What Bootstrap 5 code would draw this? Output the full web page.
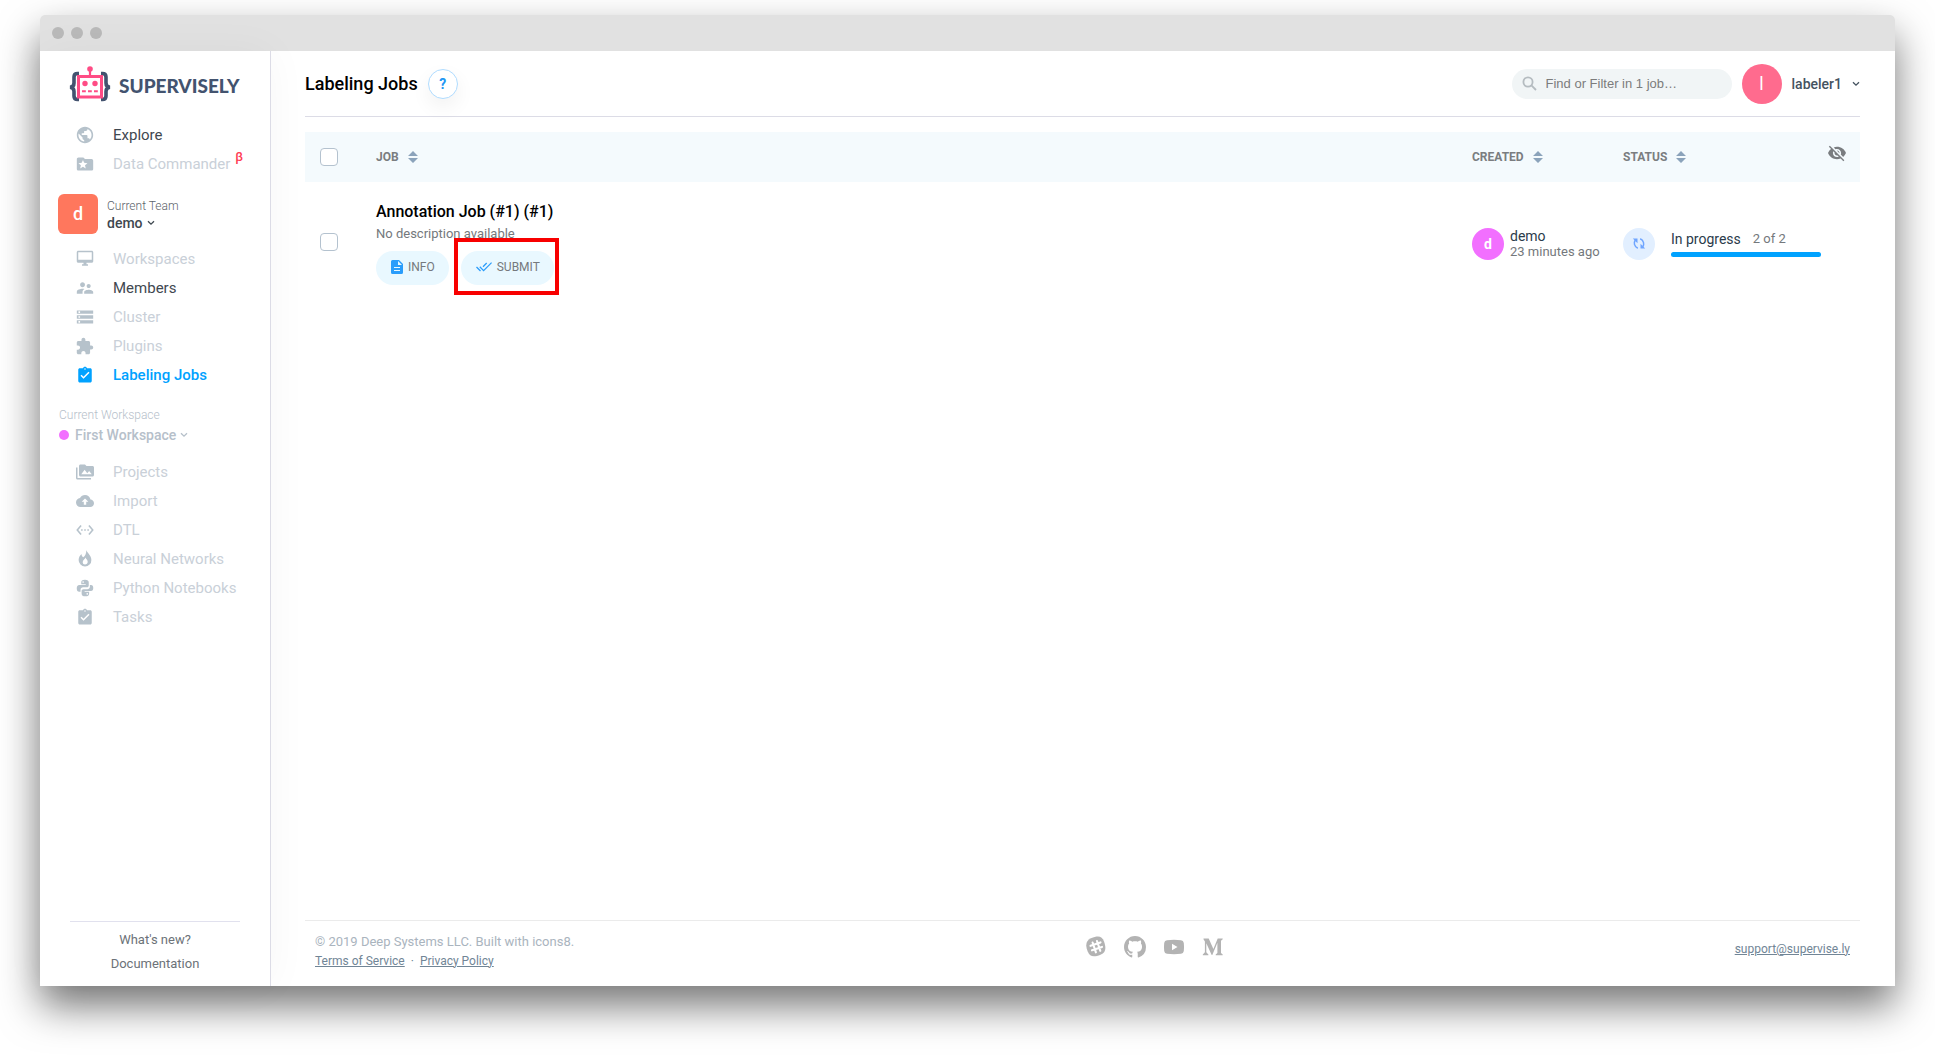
<!DOCTYPE html>
<html lang="en">
<head>
<meta charset="utf-8">
<meta name="viewport" content="width=device-width, initial-scale=1">
<title>Labeling Jobs - Supervisely</title>
<link href="https://cdn.jsdelivr.net/npm/bootstrap@5.3.0/dist/css/bootstrap.min.css" rel="stylesheet">
<style>
body { font-family: Roboto, "Liberation Sans", sans-serif; font-size: 14px; line-height: 16px; background: #fff; color: #2b3b4b; }
.stage { min-height: 100vh; padding: 15px 40px 70px; }
.app-window { background: #fff; border-radius: 5px 5px 0 0; box-shadow: 0 20px 40px rgba(0,0,0,.54); }
.titlebar { height: 36px; background: #e1e1e1; border-radius: 5px 5px 0 0; padding-left: 12px; gap: 7px; }
.titlebar span { width: 12px; height: 12px; border-radius: 50%; background: #b9b9b9; }
a { color: inherit; text-decoration: none; }
svg { display: block; flex: none; }

.sidebar { width: 231px; border-right: 1px solid #dcdce6; box-shadow: 0 0 40px rgba(0,0,0,.04); background: #fff; }
.brand { padding: 15px 0 0 28px; height: 69px; gap: 8px; }
.brand-name { font-family: Lato, sans-serif; font-weight: 900; font-size: 19px; line-height: 24px; color: #43536f; padding-top: 8px; }
.side-nav a { height: 29px; padding-left: 36px; font-size: 15px; color: #c9d0d8; }
.side-nav svg { width: 18px; height: 18px; margin-right: 19px; color: #b6c2cb; fill: currentColor; }
.side-nav a.enabled { color: #3f4850; }
.side-nav a.current { color: #00a2ff; font-weight: 500; }
.side-nav a.current svg { color: #00a2ff; }
.beta { font-size: 13px; font-weight: 500; color: #ff3e55; padding: 0 0 14px 5px; }
.team { padding: 16px 0 10px 18px; gap: 9px; }
.team-tile { width: 40px; height: 40px; border-radius: 6px; background: #ff775d; color: #fff; font-size: 18px; font-weight: 500; }
.picker { border: 0; background: none; padding: 0; gap: 4px; font-weight: 500; color: #3f4850; line-height: 17px; }
.tiny { font-size: 12px; font-weight: 300; color: #5c646b; line-height: 18px; }
.workspace { padding: 17px 0 11px 19px; }
.workspace .tiny, .workspace .picker { color: #b6c0ca; }
.workspace .picker { line-height: 22px; }
.ws-dot { width: 10px; height: 10px; border-radius: 50%; background: #f26fff; margin-right: 2px; }
.side-foot { margin: 0 30px 10px; border-top: 1px solid #e1e1ee; padding-top: 6px; font-size: 13px; line-height: 24px; color: #6c7278; }

.main-pane { padding: 0 35px 0 34px; }
.topbar { height: 66px; border-bottom: 1px solid #dcdce6; gap: 10px; }
.topbar h1 { font-size: 18px; line-height: 24px; font-weight: 500; color: #000; margin: 0; }
.help-btn { width: 30px; height: 30px; border-radius: 50%; border: 1px solid #b0dcff; background: #fff; color: #2196f3; font-weight: 700; padding: 0; box-shadow: 0 8px 20px rgba(0,0,0,.06); }
.finder { width: 220px; height: 30px; border-radius: 15px; background: #f1f5f6; padding: 0 10px; gap: 9px; }
.finder input { border: 0; background: none; padding: 0; width: 160px; outline: 0; font: 13px "Liberation Sans", sans-serif; }
.finder input::placeholder { color: #7c7c7c; opacity: 1; }
.user-pic { width: 40px; height: 40px; border-radius: 50%; background: #ff6b8e; color: #fff; font-size: 18px; }
.user-btn { border: 0; background: none; padding: 0; font-weight: 500; color: #44525f; gap: 10px; }

.jobs { width: 100%; margin-top: 15px; table-layout: fixed; }
.jobs th { height: 50px; background: #f4fafd; font-size: 12px; color: #7a7d80; padding: 0; vertical-align: middle; }
.jobs td { height: 120px; padding: 0; vertical-align: middle; }
.jobs td.lowered { padding-top: 3px; }
.c-check { width: 71px; } .c-created { width: 151px; } .c-status { width: 205px; } .c-eye { width: 32px; }
.jobs .form-check-input { width: 18px; height: 18px; margin: 0 0 0 15px; border: 1px solid #b4c2cf; border-radius: 4px; display: block; }
.sorter { border: 0; background: none; padding: 0; gap: 9px; font-weight: 700; color: inherit; }
.job-name { font-size: 16px; line-height: 24px; font-weight: 500; color: #000; }
.job-note { font-size: 13px; line-height: 20px; color: #74787c; }
.job-actions { gap: 12px; margin-top: 7px; }
.pill { height: 34px; border: 0; border-radius: 17px; background: #e9f8ff; color: #75797d; font-size: 12px; padding: 0 14px 2px 15px; gap: 5px; }
.pill-frame::after { content: ""; position: absolute; inset: -13px -5px -10px -7px; border: 4px solid #f80000; pointer-events: none; }
.who { gap: 6px; }
.mini-pic { width: 32px; height: 32px; border-radius: 50%; background: #f26fff; color: #fff; font-weight: 700; }
.sync { width: 32px; height: 32px; border-radius: 50%; background: #e2efff; }
.soft { font-size: 13px; color: #74787c; }
.meter { width: 150px; height: 5px; border-radius: 3px; margin-top: 5px; background: #e9f1f7; --bs-progress-bar-bg: #00a2ff; }
.page-foot { height: 66px; border-top: 1px solid #ebebeb; padding: 0 10px 10px; font-size: 12px; color: #718596; }
.page-foot a { text-decoration: underline; }
.page-foot .legal { font-size: 13px; color: #aab4be; line-height: 20px; padding-top: 4px; }
.page-foot .terms { line-height: 18px; gap: 6px; }
.social { gap: 17px; fill: #b3b3b3; padding-bottom: 4px; }
.app-body { min-height: 935px; }
</style>
</head>
<body>
<svg width="0" height="0" class="position-absolute" aria-hidden="true">
  <symbol id="chev" viewBox="0 0 8 6"><path d="M1 1.200l3 3 3-3" fill="none" stroke="currentColor" stroke-width="1.300"/></symbol>
  <symbol id="sort" viewBox="0 0 10 12"><path d="M5 0l5 5H0zM5 12L0 7h10z" fill="#8ba3bb"/></symbol>
  <symbol id="task" viewBox="0 0 24 24"><path d="M19 3h-4.200C14.400 1.800 13.300 1 12 1s-2.400.8-2.800 2H5c-1.100 0-2 .9-2 2v15c0 1.100.9 2 2 2h14c1.100 0 2-.9 2-2V5c0-1.100-.9-2-2-2zm-7 0c.55 0 1 .45 1 1s-.45 1-1 1-1-.45-1-1 .45-1 1-1zm-2 14l-4-4 1.410-1.410L10 14.170l6.590-6.590L18 9l-8 8z"/></symbol>
</svg>
<div class="stage">
<div class="app-window">
  <div class="titlebar d-flex align-items-center"><span></span><span></span><span></span></div>
  <div class="app-body d-flex">
    <aside class="sidebar d-flex flex-column flex-shrink-0">
      <a href="#" class="brand d-flex align-items-start">
        <svg width="43" height="36" viewBox="0 0 43 36">
          <g fill="none" stroke="#43536f" stroke-width="3.600"><path d="M11 7.500H9.500Q6 7.500 6 11v6q0 4-4 4.300 4 .3 4 4.300v4.400q0 3.500 3.500 3.500H11M33 7.500h1.500Q38 7.500 38 11v6q0 4 4 4.300-4 .3-4 4.300v4.400q0 3.500-3.500 3.500H33"/></g>
          <rect x="10.500" y="10.500" width="23" height="20.500" fill="#fff" stroke="#ff4c85" stroke-width="3"/>
          <path d="M22 4v6" stroke="#ff4c85" stroke-width="2.200"/>
          <g fill="#ff4c85"><circle cx="22" cy="3" r="2.800"/><circle cx="17" cy="17.500" r="2.700"/><circle cx="27" cy="17.500" r="2.700"/></g>
          <path d="M14 25.200h16" stroke="#ff4c85" stroke-width="2" stroke-dasharray="3.800 2.200"/>
        </svg>
        <span class="brand-name">SUPERVISELY</span>
      </a>
      <nav class="side-nav">
        <a href="#" class="enabled d-flex align-items-center"><svg viewBox="1 1 22 22"><path d="M12 2C6.480 2 2 6.480 2 12s4.480 10 10 10 10-4.480 10-10S17.520 2 12 2zm-1 17.930c-3.950-.49-7-3.850-7-7.930 0-.62.08-1.210.21-1.790L9 15v1c0 1.100.9 2 2 2v1.930zm6.900-2.540c-.26-.81-1-1.390-1.900-1.390h-1v-3c0-.55-.45-1-1-1H8v-2h2c.55 0 1-.45 1-1V7h2c1.100 0 2-.9 2-2v-.41c2.930 1.190 5 4.060 5 7.410 0 2.080-.8 3.970-2.100 5.390z"/></svg>Explore</a>
        <a href="#" class="d-flex align-items-center"><svg viewBox="1 1 22 22"><path fill-rule="evenodd" d="M20 6h-8l-2-2H4c-1.100 0-2 .9-2 2v12c0 1.100.9 2 2 2h16c1.100 0 2-.9 2-2V8c0-1.100-.9-2-2-2zM12.900 17.500L9.500 15.400l-3.400 2.100.9-3.900-3-2.600 4-.4 1.500-3.600 1.500 3.600 4 .4-3 2.600z"/></svg>Data Commander<span class="beta">β</span></a>
      </nav>
      <div class="team d-flex align-items-center">
        <div class="team-tile d-flex align-items-center justify-content-center">d</div>
        <div>
          <div class="tiny">Current Team</div>
          <button type="button" class="picker d-flex align-items-center">demo <svg width="8" height="6"><use href="#chev"/></svg></button>
        </div>
      </div>
      <nav class="side-nav">
        <a href="#" class="d-flex align-items-center"><svg viewBox="0 1 24 24"><path d="M21 2H3c-1.100 0-2 .9-2 2v12c0 1.100.9 2 2 2h7v2H8v2h8v-2h-2v-2h7c1.100 0 2-.9 2-2V4c0-1.100-.9-2-2-2zm0 12H3V4h18v10z"/></svg>Workspaces</a>
        <a href="#" class="enabled d-flex align-items-center"><svg viewBox="1 1 22 22"><path d="M16.500 12c1.380 0 2.490-1.120 2.490-2.500S17.880 7 16.500 7 14 8.120 14 9.500s1.120 2.500 2.500 2.500zM9 11c1.660 0 2.990-1.340 2.990-3S10.660 5 9 5 6 6.340 6 8s1.340 3 3 3zm7.500 3c-1.830 0-5.500.92-5.500 2.750V19h11v-2.250c0-1.830-3.670-2.750-5.500-2.750zM9 13c-2.330 0-7 1.170-7 3.500V19h7v-2.250c0-.85.33-2.340 2.370-3.470C10.500 13.100 9.660 13 9 13z"/></svg>Members</a>
        <a href="#" class="d-flex align-items-center"><svg viewBox="1 1 22 22"><path d="M2 20h20v-4H2v4zm2-3h2v2H4v-2zM2 4v4h20V4H2zm4 3H4V5h2v2zm-4 7h20v-4H2v4zm2-3h2v2H4v-2z"/></svg>Cluster</a>
        <a href="#" class="d-flex align-items-center"><svg viewBox="1 0 23 23"><path d="M20.500 11H19V7c0-1.100-.9-2-2-2h-4V3.500C13 2.120 11.880 1 10.500 1S8 2.120 8 3.500V5H4c-1.100 0-1.990.9-1.990 2v3.800H3.500c1.490 0 2.700 1.210 2.700 2.700s-1.210 2.700-2.700 2.700H2V20c0 1.100.9 2 2 2h3.800v-1.500c0-1.490 1.210-2.700 2.700-2.700s2.700 1.210 2.700 2.700V22H17c1.100 0 2-.9 2-2v-4h1.500c1.380 0 2.500-1.120 2.500-2.500S21.880 11 20.500 11z"/></svg>Plugins</a>
        <a href="#" class="current d-flex align-items-center"><svg><use href="#task"/></svg>Labeling Jobs</a>
      </nav>
      <div class="workspace">
        <div class="tiny">Current Workspace</div>
        <button type="button" class="picker d-flex align-items-center"><span class="ws-dot"></span>First Workspace <svg width="8" height="6"><use href="#chev"/></svg></button>
      </div>
      <nav class="side-nav">
        <a href="#" class="d-flex align-items-center"><svg viewBox="0 0 24 24"><path d="M2 6H0v14c0 1.100.9 2 2 2h18v-2H2V6zm20-2h-8l-2-2H6c-1.100 0-2 .9-2 2v12c0 1.100.9 2 2 2h16c1.100 0 2-.9 2-2V6c0-1.100-.9-2-2-2zM7 15l4.500-6 3.500 4.510 2.500-3.010L21 15H7z"/></svg>Projects</a>
        <a href="#" class="d-flex align-items-center"><svg viewBox="0 0 24 24"><path d="M19.350 10.040C18.670 6.590 15.640 4 12 4 9.110 4 6.600 5.640 5.350 8.040 2.340 8.360 0 10.910 0 14c0 3.310 2.690 6 6 6h13c2.760 0 5-2.240 5-5 0-2.640-2.050-4.780-4.650-4.960zM13.600 13v4h-3.200v-4H7.500L12 8.500l4.500 4.500h-2.900z"/></svg>Import</a>
        <a href="#" class="d-flex align-items-center"><svg viewBox="0.500 0.500 23 23"><path d="M7.770 6.760L6.230 5.480.82 12l5.410 6.520 1.540-1.280L3.420 12l4.350-5.240zM7 13h2v-2H7v2zm10-2h-2v2h2v-2zm-6 2h2v-2h-2v2zm6.770-7.520l-1.540 1.280L20.580 12l-4.350 5.240 1.540 1.280L23.180 12l-5.410-6.520z"/></svg>DTL</a>
        <a href="#" class="d-flex align-items-center"><svg viewBox="0 1 24 24"><path fill-rule="evenodd" d="M13.800 1c.6 3.600 6.700 7 6.700 13.200A8.500 8.500 0 0 1 12 23a8.500 8.500 0 0 1-8.500-8.600c0-3.600 1.700-6.300 3.800-8.200.2 2.300 1 3.800 2.400 4.300C12.600 9.200 13.800 5 13.800 1zM12.800 11c-.3 2-3.900 3.300-3.900 6.200A3.100 3.100 0 0 0 12 20.300c2 0 3.600-1.500 3.600-3.700 0-2.500-2.200-3.200-2.800-5.600z"/></svg>Neural Networks</a>
        <a href="#" class="d-flex align-items-center"><svg viewBox="0 0 24 24"><path fill-rule="evenodd" d="M12 1C8 1 7 2.500 7 4.500V7h6v1H4.500C2 8 1 10 1 12.500S2 17 4.500 17H6v-2.500C6 12.500 7.500 11 9.500 11h5c1.500 0 2.500-1 2.500-2.500v-4C17 2.500 15.500 1 12 1zM9.500 3a1.100 1.100 0 1 1 0 2.200 1.100 1.100 0 0 1 0-2.200zM18.500 8v2.300c0 2-1.500 3.200-3.500 3.200h-5c-1.500 0-2.500 1-2.500 2.500v3.500C7.500 21.500 9 23 12.500 23s5-1.500 5-3.500V17h-6v-1H20c2 0 3-1.500 3-4s-1-4-3-4zM15 18.800a1.100 1.100 0 1 1 0 2.200 1.100 1.100 0 0 1 0-2.200z"/></svg>Python Notebooks</a>
        <a href="#" class="d-flex align-items-center"><svg><use href="#task"/></svg>Tasks</a>
      </nav>
      <div class="side-foot mt-auto text-center">
        <a href="#" class="d-block">What's new?</a>
        <a href="#" class="d-block">Documentation</a>
      </div>
    </aside>
    <main class="main-pane flex-grow-1 d-flex flex-column">
      <header class="topbar d-flex align-items-center">
        <h1>Labeling Jobs</h1>
        <button type="button" class="help-btn">?</button>
        <label class="finder d-flex align-items-center ms-auto">
          <svg width="15" height="15" viewBox="0 0 15 15" fill="none" stroke="#b5bcc0" stroke-width="1.800"><circle cx="6" cy="6" r="4.600"/><path d="M9.400 9.400l4.600 4.600"/></svg>
          <input type="search" aria-label="Find or filter jobs" placeholder="Find or Filter in 1 job…">
        </label>
        <div class="user-pic d-flex align-items-center justify-content-center">l</div>
        <button type="button" class="user-btn d-flex align-items-center">labeler1 <svg width="8" height="6"><use href="#chev"/></svg></button>
      </header>
      <table class="jobs">
        <thead><tr>
          <th class="c-check"><input class="form-check-input" type="checkbox" aria-label="Select all jobs"></th>
          <th><button type="button" class="sorter d-flex align-items-center">JOB <svg width="10" height="12"><use href="#sort"/></svg></button></th>
          <th class="c-created"><button type="button" class="sorter d-flex align-items-center">CREATED <svg width="10" height="12"><use href="#sort"/></svg></button></th>
          <th class="c-status"><button type="button" class="sorter d-flex align-items-center">STATUS <svg width="10" height="12"><use href="#sort"/></svg></button></th>
          <th class="c-eye"><button type="button" class="sorter d-block pb-2" aria-label="Hidden jobs"><svg width="18" height="18" viewBox="1 1 22 22" fill="#7a7d80"><path d="M12 7c2.760 0 5 2.240 5 5 0 .65-.13 1.260-.36 1.830l2.920 2.920c1.510-1.260 2.700-2.890 3.430-4.750-1.730-4.390-6-7.500-11-7.500-1.400 0-2.740.25-3.980.7l2.160 2.160C10.740 7.130 11.350 7 12 7zM2 4.270l2.280 2.280.46.46C3.080 8.300 1.780 10.020 1 12c1.730 4.390 6 7.500 11 7.500 1.550 0 3.030-.3 4.380-.84l.42.42L19.730 22 21 20.730 3.270 3 2 4.270zM7.530 9.800l1.550 1.550c-.05.21-.08.43-.08.65 0 1.660 1.340 3 3 3 .22 0 .44-.03.65-.08l1.550 1.550c-.67.33-1.410.53-2.200.53-2.760 0-5-2.240-5-5 0-.79.2-1.530.53-2.200zm4.310-.78l3.150 3.150.02-.16c0-1.660-1.340-3-3-3l-.17.01z"/></svg></button></th>
        </tr></thead>
        <tbody><tr>
          <td><input class="form-check-input" type="checkbox" aria-label="Select Annotation Job"></td>
          <td>
            <div class="job-name">Annotation Job (#1) (#1)</div>
            <div class="job-note">No description available</div>
            <div class="job-actions d-flex">
              <button type="button" class="pill d-flex align-items-center"><svg width="12" height="14" viewBox="0 0 12 14"><path fill-rule="evenodd" fill="#2a9dfb" d="M1.500 0H8l4 4v8.500a1.500 1.500 0 0 1-1.500 1.500h-9A1.500 1.500 0 0 1 0 12.500v-11A1.500 1.500 0 0 1 1.500 0zM7 1v4h4zM3 7v1h6V7zm0 3v1h6v-1z"/></svg>INFO</button>
              <span class="pill-frame position-relative"><button type="button" class="pill d-flex align-items-center"><svg width="16" height="10" viewBox="0 0 16 10" fill="none" stroke="#2a9dfb" stroke-width="1.300"><path d="M.5 5l4 4M3.800 4.800L7.600 8.600l8-8M7 4.700L10.700 1"/></svg>SUBMIT</button></span>
            </div>
          </td>
          <td class="lowered">
            <div class="who d-flex align-items-center">
              <div class="mini-pic d-flex align-items-center justify-content-center">d</div>
              <div><div>demo</div><div class="soft">23 minutes ago</div></div>
            </div>
          </td>
          <td class="lowered">
            <div class="d-flex align-items-center gap-3">
              <div class="sync d-flex align-items-center justify-content-center"><svg width="14" height="14" viewBox="0 0 14 14"><g fill="none" stroke="#6fa5ff" stroke-width="1.500"><path d="M3.200 3.200C1.600 5.500 2 9.500 5.800 11.200M10.800 9.800C12.400 7.500 12 3.500 8.200 1.800"/></g><path fill="#6fa5ff" d="M.8 1.500h4.700v4.700zM13.200 11.500H8.500V6.800z"/></svg></div>
              <div>
                <div class="d-flex align-items-center"><span>In progress</span><span class="soft ms-2 ps-1">2 of 2</span></div>
                <div class="progress meter" role="progressbar" aria-label="Job progress" aria-valuenow="100" aria-valuemin="0" aria-valuemax="100"><div class="progress-bar w-100"></div></div>
              </div>
            </div>
          </td>
          <td></td>
        </tr></tbody>
      </table>
      <footer class="page-foot mt-auto d-flex justify-content-between align-items-center">
        <div>
          <div class="legal">© 2019 Deep Systems LLC. Built with icons8.</div>
          <div class="terms d-flex"><a href="#">Terms of Service</a><span>·</span><a href="#">Privacy Policy</a></div>
        </div>
        <div class="social d-flex align-items-center">
          <a href="#" aria-label="Slack"><svg width="22" height="22" viewBox="0 0 22 22"><path d="M6 2.200C13-.6 17-.3 19 5.500s2.600 11-3.500 13.300S5 21.500 2.700 15.500.5 4.800 6 2.200z"/><g stroke="#fff" stroke-width="2.100" stroke-linecap="round"><path d="M7.600 6.500l3.300 9.800M12 5l3.300 9.800M5.500 9.800l10-3.400M7 14.300l10-3.400"/></g></svg></a>
          <a href="#" aria-label="GitHub"><svg width="22" height="22" viewBox="0 0 16 16"><path d="M8 0C3.580 0 0 3.580 0 8c0 3.540 2.290 6.530 5.470 7.590.4.070.55-.17.55-.38 0-.19-.01-.82-.01-1.490-2.010.37-2.530-.49-2.690-.94-.09-.23-.48-.94-.82-1.130-.28-.15-.68-.52-.01-.53.63-.01 1.080.58 1.230.82.72 1.210 1.870.87 2.330.66.07-.52.28-.87.51-1.070-1.780-.2-3.640-.89-3.640-3.950 0-.87.31-1.590.82-2.150-.08-.2-.36-1.020.08-2.120 0 0 .67-.21 2.200.82.64-.18 1.320-.27 2-.27s1.360.09 2 .27c1.530-1.040 2.200-.82 2.200-.82.44 1.100.16 1.920.08 2.120.51.56.82 1.270.82 2.150 0 3.070-1.870 3.750-3.650 3.950.29.25.54.73.54 1.480 0 1.070-.01 1.930-.01 2.200 0 .21.15.46.55.38A8.010 8.010 0 0 0 16 8c0-4.420-3.580-8-8-8z"/></svg></a>
          <a href="#" aria-label="YouTube"><svg width="22" height="22" viewBox="0 0 22 22"><path fill-rule="evenodd" d="M4 4.200q7-.8 14 0 2.500.2 2.800 2.800.5 4 0 8-.3 2.600-2.800 2.800-7 .8-14 0Q1.500 17.600 1.200 15q-.5-4 0-8 .3-2.600 2.800-2.800zM9 7.800v6.400l5.500-3.200z"/></svg></a>
          <a href="#" aria-label="Medium"><svg width="22" height="22" viewBox="0 0 22 22"><path d="M1.500 2.500h5.200L11.400 13l4.300-10.500h5v.8L19 4.800v12.300l1.700 1.300v.8h-7v-.8l1.700-1.400V6.800L10.300 19h-.6L4.300 7.300v8.900l2.100 2.200v.8H.8v-.8l2.100-2.200V5.400L1.500 3.300z"/></svg></a>
        </div>
        <a href="#">support@supervise.ly</a>
      </footer>
    </main>
  </div>
</div>
</div>
<script src="https://cdn.jsdelivr.net/npm/bootstrap@5.3.0/dist/js/bootstrap.bundle.min.js"></script>
</body>
</html>
